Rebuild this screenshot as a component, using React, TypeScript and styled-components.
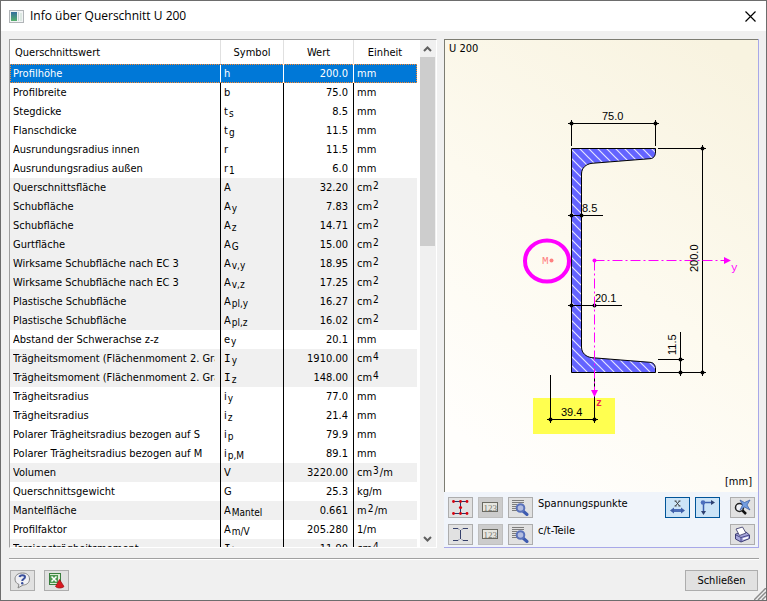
import React, { useRef, useState } from "react";
import styled, { createGlobalStyle } from "styled-components";

const GlobalStyle = createGlobalStyle`
  * { box-sizing: border-box; }
  body { margin: 0; background: #f0f0f0; }
  button { font: inherit; color: inherit; padding: 0; }
`;

const Dialog = styled.div`
  display: flex;
  flex-direction: column;
  height: 100vh;
  min-height: 420px;
  border: 1px solid #6d6d6d;
  background: #f0f0f0;
  color: #000;
  font: 11px/19px "DejaVu Sans Condensed", "DejaVu Sans", sans-serif;
  position: relative;
`;

const TitleBar = styled.header`
  display: flex;
  align-items: center;
  gap: 6px;
  height: 30px;
  padding: 0 9px 0 8px;
  background: #fff;
`;

const Title = styled.h1`
  flex: 1;
  margin: 0;
  font: 12px/30px "Open Sans", "Noto Sans", sans-serif;
`;

const CloseButton = styled.button`
  display: grid;
  place-items: center;
  width: 13px;
  height: 16px;
  border: 0;
  background: transparent;
`;

const Content = styled.main`
  flex: 1;
  min-height: 0;
  display: grid;
  grid-template-columns: minmax(0, 428fr) minmax(0, 315fr);
  gap: 7px;
  padding: 8px 7px 0 8px;
`;

const TablePane = styled.section`
  display: flex;
  min-height: 0;
  border: 1px solid #a0a0a0;
  border-right-color: #fff;
  border-bottom-color: #fff;
  background: #fff;
`;

const TableScroll = styled.div`
  flex: 1;
  min-width: 0;
  overflow-x: hidden;
  overflow-y: auto;
  scrollbar-width: none;
`;

const Table = styled.table`
  width: 100%;
  table-layout: fixed;
  border-collapse: separate;
  border-spacing: 0;
`;

const HeadCell = styled.th<{ $start?: boolean }>`
  position: sticky;
  top: 0;
  z-index: 1;
  height: 24px;
  padding: 0 5px;
  border-right: 1px solid #e0e0e0;
  background: #fff;
  font-weight: normal;
  text-align: ${(p) => (p.$start ? "left" : "center")};
  &:last-child { border-right-color: #fff; }
`;

const Row = styled.tr<{ $shaded: boolean; $selected: boolean }>`
  background: ${(p) => (p.$selected ? "#0078d7" : p.$shaded ? "#f0f0f0" : "#fff")};
  color: ${(p) => (p.$selected ? "#fff" : "#000")};
  outline: ${(p) => (p.$selected ? "1px dotted #ff8728" : "none")};
  outline-offset: -1px;
`;

const Cell = styled.td<{ $end?: boolean; $selected: boolean }>`
  height: 19px;
  padding: 0 5px 0 3px;
  line-height: 20px;
  white-space: nowrap;
  text-align: ${(p) => (p.$end ? "right" : "left")};
  border-right: 1px solid ${(p) => (p.$selected ? "#fff" : "#000")};
  &:last-child { border-right: 0; }
`;

const Clip = styled.div`
  height: 19px;
  overflow: hidden;
`;

const Letter = styled.span<{ $slab: boolean }>`
  font-family: ${(p) => (p.$slab ? '"DejaVu Sans Mono", monospace' : "inherit")};
  line-height: 10px;
`;

const Sub = styled.span`
  display: inline-block;
  margin-left: 1px;
  font-size: 10px;
  line-height: 10px;
  vertical-align: -2px;
`;

const Sup = styled.span`
  display: inline-block;
  margin: 0 1px;
  font-size: 10px;
  line-height: 10px;
  vertical-align: 2px;
`;

const ScrollBar = styled.div`
  display: flex;
  flex-direction: column;
  width: 19px;
  padding: 0 1px 0 3px;
  background: linear-gradient(90deg, #fff 3px, #f0f0f0 3px);
`;

const ScrollButton = styled.button`
  display: grid;
  place-items: center;
  height: 17px;
  border: 0;
  background: #f0f0f0;
`;

const Track = styled.div`
  flex: 1;
`;

const Thumb = styled.div`
  height: 40%;
  background: #cdcdcd;
`;

const ViewPane = styled.section`
  display: flex;
  flex-direction: column;
  min-height: 0;
  border-right: 1px solid #a8a8e8;
  border-bottom: 1px solid #a8a8e8;
`;

const Canvas = styled.div`
  flex: 1;
  min-height: 0;
  position: relative;
  display: flex;
  flex-direction: column;
  justify-content: space-between;
  border-left: 1px solid #7c7c72;
  border-top: 1px solid #7c7c72;
  background: linear-gradient(35deg, #fffefc 10%, #fdfaef 50%, #f8f3e0 95%);
`;

const Drawing = styled.svg`
  position: absolute;
  inset: 0;
  width: 100%;
  height: 100%;
`;

const Caption = styled.span<{ $end?: boolean }>`
  padding: 0 6px 0 4px;
  line-height: ${(p) => (p.$end ? 20 : 17)}px;
  text-align: ${(p) => (p.$end ? "right" : "left")};
`;

const ToolPanel = styled.div`
  display: grid;
  gap: 6px;
  padding: 5px 3px 2px 4px;
  background: #f0f4fa;
`;

const ToolRow = styled.div`
  display: flex;
  gap: 5px;
`;

const ToolLabel = styled.span`
  flex: 1;
  line-height: 14px;
`;

const ToolButton = styled.button<{ $tone?: "plain" | "off" | "active"; $apart?: boolean }>`
  display: grid;
  place-items: center;
  width: 25px;
  height: 21px;
  margin-left: ${(p) => (p.$apart ? 5 : 0)}px;
  border: 1px solid
    ${(p) => (p.$tone === "active" ? "#005499" : p.$tone === "off" ? "#bfbfbf" : "#adadad")};
  background: ${(p) =>
    p.$tone === "active" ? "#cce4f7" : p.$tone === "off" ? "#cccccc" : "#e1e1e1"};
`;

const Footer = styled.footer`
  display: flex;
  gap: 9px;
  margin: 10px 7px 0 8px;
  padding: 11px 1px 9px 1px;
  border-top: 1px solid #a0a0a0;
  box-shadow: inset 0 1px #fff;
`;

const Spacer = styled.div`
  flex: 1;
`;

const TextButton = styled.button`
  height: 21px;
  width: 73px;
  border: 1px solid #adadad;
  background: #e1e1e1;
`;

const Grip = styled.svg`
  position: absolute;
  right: 0;
  bottom: 0;
`;

type Entry = [name: string, symbol: string, sub: string, value: string, unit: string, shaded?: boolean];

const entries: Entry[] = [
  ["Profilhöhe", "h", "", "200.0", "mm"],
  ["Profilbreite", "b", "", "75.0", "mm"],
  ["Stegdicke", "t", "s", "8.5", "mm"],
  ["Flanschdicke", "t", "g", "11.5", "mm"],
  ["Ausrundungsradius innen", "r", "", "11.5", "mm"],
  ["Ausrundungsradius außen", "r", "1", "6.0", "mm"],
  ["Querschnittsfläche", "A", "", "32.20", "cm^2", true],
  ["Schubfläche", "A", "y", "7.83", "cm^2", true],
  ["Schubfläche", "A", "z", "14.71", "cm^2", true],
  ["Gurtfläche", "A", "G", "15.00", "cm^2", true],
  ["Wirksame Schubfläche nach EC 3", "A", "v,y", "18.95", "cm^2", true],
  ["Wirksame Schubfläche nach EC 3", "A", "v,z", "17.25", "cm^2", true],
  ["Plastische Schubfläche", "A", "pl,y", "16.27", "cm^2", true],
  ["Plastische Schubfläche", "A", "pl,z", "16.02", "cm^2", true],
  ["Abstand der Schwerachse z-z", "e", "y", "20.1", "mm"],
  ["Trägheitsmoment (Flächenmoment 2. Grad)", "I", "y", "1910.00", "cm^4", true],
  ["Trägheitsmoment (Flächenmoment 2. Grad)", "I", "z", "148.00", "cm^4", true],
  ["Trägheitsradius", "i", "y", "77.0", "mm"],
  ["Trägheitsradius", "i", "z", "21.4", "mm"],
  ["Polarer Trägheitsradius bezogen auf S", "i", "p", "79.9", "mm"],
  ["Polarer Trägheitsradius bezogen auf M", "i", "p,M", "89.1", "mm"],
  ["Volumen", "V", "", "3220.00", "cm^3/m", true],
  ["Querschnittsgewicht", "G", "", "25.3", "kg/m"],
  ["Mantelfläche", "A", "Mantel", "0.661", "m^2/m", true],
  ["Profilfaktor", "A", "m/V", "205.280", "1/m"],
  ["Torsionsträgheitsmoment", "I", "t", "11.90", "cm^4", true],
];

function Unit({ text }: { text: string }) {
  const [base, rest] = text.split("^");
  if (!rest) return <>{base}</>;
  return (
    <>
      {base}
      <Sup>{rest[0]}</Sup>
      {rest.slice(1)}
    </>
  );
}

function PropertyTable() {
  const [selected, setSelected] = useState(0);
  const scroller = useRef<HTMLDivElement>(null);
  const scrollBy = (top: number) => scroller.current?.scrollBy({ top });

  return (
    <TablePane>
      <TableScroll ref={scroller}>
        <Table>
          <colgroup>
            <col />
            <col width="63" />
            <col width="70" />
            <col width="63" />
          </colgroup>
          <thead>
            <tr>
              <HeadCell $start>Querschnittswert</HeadCell>
              <HeadCell>Symbol</HeadCell>
              <HeadCell>Wert</HeadCell>
              <HeadCell>Einheit</HeadCell>
            </tr>
          </thead>
          <tbody>
            {entries.map(([name, symbol, sub, value, unit, shaded], i) => {
              const on = i === selected;
              return (
                <Row key={i} $shaded={!!shaded} $selected={on} onClick={() => setSelected(i)}>
                  <Cell $selected={on}>
                    <Clip>{name}</Clip>
                  </Cell>
                  <Cell $selected={on}>
                    <Clip>
                      <Letter $slab={symbol === "I"}>{symbol}</Letter>
                      {sub && <Sub>{sub}</Sub>}
                    </Clip>
                  </Cell>
                  <Cell $selected={on} $end>
                    <Clip>{value}</Clip>
                  </Cell>
                  <Cell $selected={on}>
                    <Clip>
                      <Unit text={unit} />
                    </Clip>
                  </Cell>
                </Row>
              );
            })}
          </tbody>
        </Table>
      </TableScroll>
      <ScrollBar>
        <ScrollButton aria-label="Nach oben" onClick={() => scrollBy(-19)}>
          <svg width="9" height="6" viewBox="0 0 9 6">
            <path d="M1 5 4.500 1.500 8 5" fill="none" stroke="#606060" strokeWidth="2" />
          </svg>
        </ScrollButton>
        <Track>
          <Thumb />
        </Track>
        <ScrollButton aria-label="Nach unten" onClick={() => scrollBy(19)}>
          <svg width="9" height="6" viewBox="0 0 9 6">
            <path d="M1 1 4.500 4.500 8 1" fill="none" stroke="#606060" strokeWidth="2" />
          </svg>
        </ScrollButton>
      </ScrollBar>
    </TablePane>
  );
}

const ticks: [number, number][] = [
  [571.5, 123.5], [655.5, 123.5], [702.5, 148.5], [702.5, 372.5], [571.5, 215.5],
  [581.5, 215.5], [571.5, 305.5], [594.5, 305.5], [680.5, 359.5], [680.5, 372.5],
  [550.5, 419.5], [594.5, 419.5],
];

const profile =
  "M571.5 148.5H655.5V152C655.5 156 653.5 158.500 650 158.700L592 163.300C586 164 581.500 168 581.500 174V347C581.500 353 586 357 592 357.700L650 362.300C653.500 362.500 655.500 365 655.500 369V372.500H571.500Z";

function SectionDrawing() {
  return (
    <Drawing viewBox="445 40 313 452" role="img" aria-label="Querschnitt U 200">
      <defs>
        <pattern id="hatch" width="9" height="9" patternUnits="userSpaceOnUse" x="571" y="149">
          <path d="M-1 -1 10 10M-1 8 1 10M8 -1 10 1" stroke="#e4e4ff" strokeWidth="1.2" />
        </pattern>
      </defs>
      <rect x="533" y="398" width="82" height="36" fill="#ffff50" />
      <path d={profile} fill="#6464ff" />
      <path d={profile} fill="url(#hatch)" stroke="#000" />
      <path
        d="M568 123.500H659M571.500 120V146M655.500 120V146M658 148.500H706M702.500 145V376M658 372.500H706M568 215.500H603M568 305.500H622M680.500 332V376M658 359.500H684M550.500 375V423M594.500 375V423M547 419.500H598"
        stroke="#000"
        fill="none"
      />
      {ticks.map(([x, y]) => (
        <circle key={`${x}-${y}`} cx={x} cy={y} r="2" />
      ))}
      <ellipse cx="547" cy="261" rx="22" ry="20.5" fill="none" stroke="#f0f" strokeWidth="4" />
      <g stroke="#f0f" fill="none" strokeDasharray="10 3 2 3">
        <path d="M594.500 260.500H724" />
        <path d="M594.500 260.500V390" />
      </g>
      <g fill="#f0f">
        <circle cx="594.5" cy="260.5" r="2" />
        <path d="M724 257V264L731 260.500ZM591 390H598L594.500 397Z" />
      </g>
      <circle cx="551.5" cy="260.5" r="2" fill="#ff8080" />
      <g fontFamily="Liberation Sans, sans-serif" fontSize="11">
        <text x="602" y="120">75.0</text>
        <text x="582" y="212">8.5</text>
        <text x="595" y="302">20.1</text>
        <text x="561" y="416">39.4</text>
        <text transform="translate(698 272) rotate(-90)">200.0</text>
        <text transform="translate(676 355) rotate(-90)">11.5</text>
      </g>
      <g fontFamily="Liberation Mono, monospace" fontSize="11">
        <text x="542" y="264" fill="#ff8080">M</text>
        <text x="731" y="271" fill="#f0f">y</text>
        <text x="596" y="406" fill="#f0204c" fontSize="10" fontWeight="bold">z</text>
      </g>
    </Drawing>
  );
}

function BeamIcon({ points }: { points?: boolean }) {
  return (
    <svg width="17" height="15" viewBox="0 0 17 15">
      {points ? (
        <>
          <path d="M2 1.500H15M8.500 2V13M2 13.500H15" stroke="#2b3566" fill="none" />
          <g fill="#d8000c">
            {[1.5, 8.5, 15].map((x) => (
              <g key={x}>
                <circle cx={x} cy="1.5" r="1.4" />
                <circle cx={x} cy="13.5" r="1.4" />
              </g>
            ))}
            <circle cx="8.5" cy="7.5" r="1.6" />
          </g>
        </>
      ) : (
        <path
          d="M1 1.500H6L7 2.500M16 1.500H11L10 2.500M8.500 3V12M1 13.500H6L7 12.500M16 13.500H11L10 12.500"
          stroke="#35406b"
          fill="none"
        />
      )}
    </svg>
  );
}

function NumbersIcon() {
  return (
    <svg width="17" height="13" viewBox="0 0 17 13">
      <rect x="0.5" y="1.5" width="15" height="9" fill="#e6e6e0" stroke="#6a6a62" />
      <text x="1.500" y="9.500" fontFamily="Liberation Serif, serif" fontSize="9" fill="#77776f">123</text>
    </svg>
  );
}

function DetailsIcon() {
  return (
    <svg width="17" height="17" viewBox="0 0 17 17">
      <path d="M0 1.500H12M0 3.500H12M0 5.500H5M0 7.500H4M0 9.500H4M0 11.500H5" stroke="#7c7c7c" />
      <path d="M11 12 15 15.500" stroke="#3d5bb0" strokeWidth="3" strokeLinecap="round" />
      <circle cx="8.500" cy="9" r="3.800" fill="#b3bde0" stroke="#5a72bb" strokeWidth="2" />
    </svg>
  );
}

function ValuesIcon() {
  return (
    <svg width="17" height="17" viewBox="0 0 17 17">
      <path d="M6.500 2 10.500 7M10.500 2 6.500 7M5.500 2H7.500M9.500 2H11.500M5.500 7H7.500M9.500 7H11.500" stroke="#333" strokeWidth="0.900" />
      <path d="M4 11.500H13" stroke="#4a6db8" strokeWidth="3" />
      <path d="M5 8.500V14.500L1 11.500ZM12 8.500V14.500L16 11.500Z" fill="#3f5fa8" />
    </svg>
  );
}

function AxesIcon() {
  return (
    <svg width="17" height="17" viewBox="0 0 17 17">
      <path d="M3 3.500H14M4.500 3V14" stroke="#3d5fae" strokeWidth="1.500" />
      <path d="M12 1V6L16 3.500ZM2 12H7L4.500 16Z" fill="#2e4170" />
      <circle cx="4" cy="3.500" r="2.300" fill="#4d70bd" />
    </svg>
  );
}

function ResetZoomIcon() {
  return (
    <svg width="17" height="17" viewBox="0 0 17 17">
      <circle cx="5.500" cy="8.500" r="4" fill="#f1f3f8" stroke="#222" strokeWidth="1.500" />
      <path d="M8.500 11.500 12 15" stroke="#111" strokeWidth="2.500" />
      <path d="M6 1 10.500 3.500 16 1 13 6 16 11 10.500 8 6 11 8.500 6Z" fill="#729de0" stroke="#3558a0" strokeWidth="0.700" />
    </svg>
  );
}

function PrinterIcon() {
  return (
    <svg width="17" height="17" viewBox="0 0 17 17">
      <path d="M1.500 8 12 6 15.500 9V12.500L7 16 1.500 13Z" fill="#a7a7dc" stroke="#3d3d74" />
      <path d="M2 3 8.500 1 12 7 5.500 9.500Z" fill="#fff" stroke="#54547e" />
      <path d="M2 9 7 11.500 15.500 9M7 11.500V16" stroke="#494988" fill="none" />
      <path d="M9 13 14 11.500" stroke="#fff" strokeWidth="1.500" />
    </svg>
  );
}

function HelpIcon() {
  return (
    <svg width="17" height="17" viewBox="0 0 17 17">
      <path d="M8.500 1C13 1 15.500 3.500 15.500 7 15.500 10.500 13 13 9 13L4 16 5 12.500C2.500 11.500 1 9.500 1 7 1 3.500 4 1 8.500 1Z" fill="#f0f0f4" stroke="#858585" />
      <path d="M5.500 5C6 2.500 11 2.500 11 5 11 7 8.200 7 8.200 9" stroke="#3b509c" strokeWidth="2" fill="none" />
      <circle cx="8.200" cy="11.200" r="1.200" fill="#3b509c" />
    </svg>
  );
}

function ExcelIcon() {
  return (
    <svg width="17" height="17" viewBox="0 0 17 17">
      <rect x="1.500" y="1.500" width="11" height="11" fill="#dcebd6" stroke="#397d3e" />
      <rect x="2" y="3" width="8" height="8" fill="#4e9952" />
      <path d="M3.500 4.500 8.500 9.500M8.500 4.500 3.500 9.500" stroke="#fff" strokeWidth="1.500" />
      <path d="M11.500 7.500 16 14.500C14 16.500 9.500 16.500 7.500 14.500Z" fill="#d91820" stroke="#990d12" strokeWidth="0.700" />
    </svg>
  );
}

export default function App() {
  return (
    <>
      <GlobalStyle />
      <Dialog>
        <TitleBar>
          <svg width="15" height="13" viewBox="0 0 15 13">
            <defs>
              <linearGradient id="appFill" x1="0" y1="0" x2="0" y2="1">
                <stop offset="0" stopColor="#356e9e" />
                <stop offset="1" stopColor="#57b06c" />
              </linearGradient>
            </defs>
            <rect x="0.500" y="0.500" width="14" height="12" fill="#f2f4f5" stroke="#b1b5b8" />
            <rect x="2" y="2" width="6" height="9" fill="url(#appFill)" />
            <path d="M9.500 2V11" stroke="#c8d2d2" />
            <rect x="11" y="3" width="2" height="8" fill="#dce8e2" />
          </svg>
          <Title>Info über Querschnitt U 200</Title>
          <CloseButton aria-label="Fenster schließen">
            <svg width="11" height="11" viewBox="0 0 11 11">
              <path d="M0.500 0.500 10.500 10.500M10.500 0.500 0.500 10.500" stroke="#000" strokeWidth="1.200" />
            </svg>
          </CloseButton>
        </TitleBar>

        <Content>
          <PropertyTable />
          <ViewPane>
            <Canvas>
              <SectionDrawing />
              <Caption>U 200</Caption>
              <Caption $end>[mm]</Caption>
            </Canvas>
            <ToolPanel>
              <ToolRow>
                <ToolButton aria-label="Spannungspunkte anzeigen"><BeamIcon points /></ToolButton>
                <ToolButton aria-label="Nummern der Spannungspunkte" $tone="off" disabled><NumbersIcon /></ToolButton>
                <ToolButton aria-label="Details der Spannungspunkte"><DetailsIcon /></ToolButton>
                <ToolLabel>Spannungspunkte</ToolLabel>
                <ToolButton aria-label="Bemaßung" aria-pressed="true" $tone="active"><ValuesIcon /></ToolButton>
                <ToolButton aria-label="Achsen" aria-pressed="true" $tone="active"><AxesIcon /></ToolButton>
                <ToolButton aria-label="Gesamtansicht" $apart><ResetZoomIcon /></ToolButton>
              </ToolRow>
              <ToolRow>
                <ToolButton aria-label="c/t-Teile anzeigen"><BeamIcon /></ToolButton>
                <ToolButton aria-label="Nummern der c/t-Teile" $tone="off" disabled><NumbersIcon /></ToolButton>
                <ToolButton aria-label="Details der c/t-Teile"><DetailsIcon /></ToolButton>
                <ToolLabel>c/t-Teile</ToolLabel>
                <ToolButton aria-label="Drucken"><PrinterIcon /></ToolButton>
              </ToolRow>
            </ToolPanel>
          </ViewPane>
        </Content>

        <Footer>
          <ToolButton aria-label="Hilfe"><HelpIcon /></ToolButton>
          <ToolButton aria-label="Nach Excel exportieren"><ExcelIcon /></ToolButton>
          <Spacer />
          <TextButton>Schließen</TextButton>
        </Footer>
        <Grip width="12" height="12" viewBox="0 0 12 12">
          <path d="M0 12 12 0M4 12 12 4M8 12 12 8" stroke="#8c8c8c" strokeWidth="1.500" />
        </Grip>
      </Dialog>
    </>
  );
}
